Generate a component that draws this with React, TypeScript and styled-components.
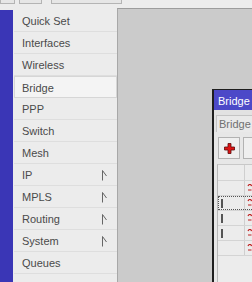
import React from "react";
import styled, { createGlobalStyle } from "styled-components";

const Global = createGlobalStyle`
  html, body { margin: 0; padding: 0; }
  body {
    width: 252px; height: 282px; overflow: hidden;
    font-family: "Liberation Sans", Arial, sans-serif;
    background: #ececec;
  }
`;

const Page = styled.div`
  width: 252px; height: 282px; display: flex; flex-direction: column; overflow: hidden;
`;

const TopBar = styled.div`
  height: 8px; flex: none; display: flex; align-items: flex-start; background: #ececec;
`;

const TopButton = styled.div<{ $w: number; $ml: number }>`
  width: ${p => p.$w}px; margin-left: ${p => p.$ml}px; height: 4px; box-sizing: border-box;
  border: 1px solid #b4b4b4; border-top: none; background: #e6e6e6;
`;

const Main = styled.div`
  flex: 1; display: flex; min-height: 0;
`;

const Side = styled.div`
  width: 117px; flex: none; display: flex; padding-top: 2px; box-sizing: border-box;
`;

const BlueStrip = styled.div`
  width: 13px; flex: none; background: #3a36b6;
`;

const Menu = styled.div`
  width: 103px; flex: none; display: flex; flex-direction: column; padding-left: 1px;
`;

const Item = styled.div<{ $active?: boolean }>`
  height: 22px; flex: none; box-sizing: border-box; display: flex; align-items: center;
  justify-content: space-between; padding: 1px 9px 0 8px; font-size: 11px; color: #4a4a4a;
  border-bottom: 1px solid #dedede;
  ${p => p.$active ? `background: #f4f4f4; border: 1px solid #d6d6d6; padding-left: 7px;` : ``}
`;

const Arrow = () => (
  <svg width="6" height="11" viewBox="0 0 6 11">
    <path d="M0.5 0.5 V10.5 M0.5 0.5 L4.5 6" stroke="#666" strokeWidth="1" fill="none" />
  </svg>
);

const Workspace = styled.div`
  flex: 1; position: relative; background: #cbcbcb; border-top: 1px solid #9c9c9c;
  border-left: 1px solid #a8a8a8; overflow: hidden;
`;

const Window = styled.div`
  position: absolute; left: 94px; top: 80px; width: 120px; height: 220px;
  border-left: 2px solid #1e1e1e; border-top: 1px solid #1e1e1e; background: #e7e7e7;
  display: flex; flex-direction: column;
`;

const TitleBar = styled.div`
  height: 20px; flex: none; background: #4c49c8; color: #fff; font-size: 11px;
  display: flex; align-items: center; padding: 1px 0 0 4px; box-sizing: border-box;
`;

const TabRow = styled.div`
  height: 22px; flex: none; display: flex; align-items: flex-end; padding-left: 2px;
  background: #e2e2e2;
`;

const Tab = styled.div`
  height: 17px; box-sizing: border-box; border: 1px solid #c4c4c4; border-bottom: none;
  background: #e9e9e9; color: #707070; font-size: 11px; padding: 0 2px;
  display: flex; align-items: center;
`;

const ToolRow = styled.div`
  height: 32px; flex: none; display: flex; align-items: center; gap: 3px; padding-left: 4px;
`;

const ToolButton = styled.div`
  width: 22px; height: 22px; box-sizing: border-box; border: 1px solid #b2b2b2;
  background: #efefef; display: flex; align-items: center; justify-content: center;
`;

const Table = styled.div`
  margin-left: 3px; flex: 1; border-left: 1px solid #b8b8b8; border-top: 1px solid #c8c8c8;
  display: flex; flex-direction: column; background: #ececec;
`;

const Row = styled.div<{ $h: number }>`
  height: ${p => p.$h}px; flex: none; box-sizing: border-box; display: flex;
  border-bottom: 1px solid #d4d4d4;
`;

const Cell = styled.div<{ $w?: number }>`
  width: ${p => p.$w ? `${p.$w}px` : "auto"}; flex: ${p => p.$w ? "none" : 1};
  box-sizing: border-box; border-right: 1px solid #cfcfcf; display: flex; align-items: center;
  padding-left: 2px; position: relative;
`;

const Focus = styled.div`
  position: absolute; inset: 0 -40px 0 0; border: 1px dotted #555;
`;

const Bar = styled.div`
  width: 2px; height: 9px; background: #555; margin-left: 1px;
`;

const Plus = () => (
  <svg width="11" height="11" viewBox="0 0 11 11">
    <path d="M4 0.5 H7 V4 H10.5 V7 H7 V10.5 H4 V7 H0.5 V4 H4 Z" fill="#dd1414" stroke="#5a0a0a" strokeWidth="0.8" />
  </svg>
);

const Mark = () => (
  <svg width="6" height="8" viewBox="0 0 6 8">
    <path d="M1 2 C2 0 4 0 4.5 2 M1 6 L4.5 6" stroke="#c02020" strokeWidth="1.2" fill="none" />
  </svg>
);

const items = ["Quick Set", "Interfaces", "Wireless", "Bridge", "PPP", "Switch", "Mesh", "IP", "MPLS", "Routing", "System", "Queues", ""];
const withArrow = new Set(["IP", "MPLS", "Routing", "System"]);

const rows = [
  { bar: false, focus: false },
  { bar: true, focus: true },
  { bar: true, focus: false },
  { bar: true, focus: false },
  { bar: false, focus: false },
];

export default function App() {
  return (
    <Page>
      <Global />
      <TopBar>
        <TopButton $w={15} $ml={0} />
        <TopButton $w={23} $ml={4} />
        <TopButton $w={71} $ml={9} />
      </TopBar>
      <Main>
        <Side>
          <BlueStrip />
          <Menu>
            {items.map((t, i) => (
              <Item key={i} $active={t === "Bridge"}>
                <span>{t}</span>
                {withArrow.has(t) && <Arrow />}
              </Item>
            ))}
          </Menu>
        </Side>
        <Workspace>
          <Window>
            <TitleBar>Bridge</TitleBar>
            <TabRow><Tab>Bridge</Tab></TabRow>
            <ToolRow>
              <ToolButton><Plus /></ToolButton>
              <ToolButton />
            </ToolRow>
            <Table>
              <Row $h={16}><Cell $w={27} /><Cell /></Row>
              {rows.map((r, i) => (
                <Row key={i} $h={15}>
                  <Cell $w={27}>
                    {r.focus && <Focus />}
                    {r.bar && <Bar />}
                  </Cell>
                  <Cell><Mark /></Cell>
                </Row>
              ))}
            </Table>
          </Window>
        </Workspace>
      </Main>
    </Page>
  );
}
